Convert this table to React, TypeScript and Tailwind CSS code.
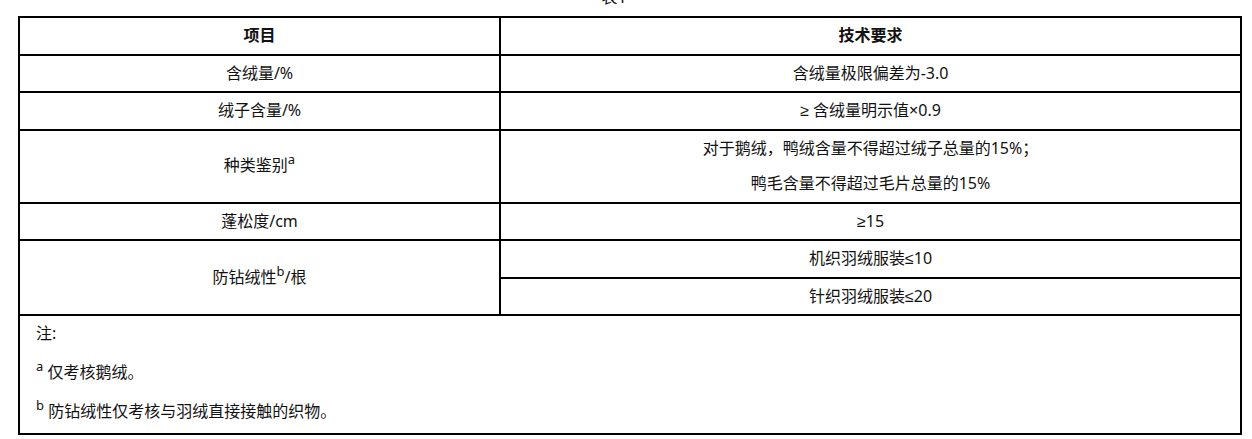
export default function App() {
  const cell = 'border-2 border-black text-center align-middle leading-[35.5px] p-0';
  const sym = "font-['Liberation_Sans',sans-serif]";

  return (
    <div className="bg-white w-[1252px] h-[439px] overflow-hidden font-['Noto_Sans','Noto_Sans_CJK_SC',sans-serif] text-[16px] text-[#111]">
      <div className="ml-[18px] w-[1224px]">
        {/* caption is scrolled mostly out of view */}
        <div className="-mt-[15px] h-6 leading-6 text-center pr-[32px]">表1</div>
        <table className="mt-[7px] w-full border-collapse border-2 border-black">
          <colgroup>
            <col className="w-[481px]" />
            <col />
          </colgroup>
          <tbody>
            <tr>
              <td className={`${cell} font-bold`}>项目</td>
              <td className={`${cell} font-bold`}>技术要求</td>
            </tr>
            <tr>
              <td className={cell}>含绒量/%</td>
              <td className={cell}>含绒量极限偏差为-3.0</td>
            </tr>
            <tr>
              <td className={cell}>绒子含量/%</td>
              <td className={cell}>
                <span className={sym}>≥</span> 含绒量明示值×0.9
              </td>
            </tr>
            <tr>
              <td className={cell}>
                种类鉴别<sup className="text-[13px] -top-[0.55em]">a</sup>
              </td>
              <td className={cell}>
                <p>对于鹅绒，鸭绒含量不得超过绒子总量的15%；</p>
                <p>鸭毛含量不得超过毛片总量的15%</p>
              </td>
            </tr>
            <tr>
              <td className={cell}>蓬松度/cm</td>
              <td className={cell}>
                <span className={sym}>≥</span>15
              </td>
            </tr>
            <tr>
              <td className={cell} rowSpan={2}>
                防钻绒性<sup className="text-[13px] -top-[0.55em]">b</sup>/根
              </td>
              <td className={cell}>
                机织羽绒服装<span className={sym}>≤</span>10
              </td>
            </tr>
            <tr>
              <td className={cell}>
                针织羽绒服装<span className={sym}>≤</span>20
              </td>
            </tr>
            <tr>
              <td className="border-2 border-black text-left align-top pl-4 pt-[5px] pb-[10px]" colSpan={2}>
                <div className="flex flex-col gap-[15px] leading-6">
                  <p>注:</p>
                  <p>
                    <sup className="text-[13px] -top-[0.55em]">a</sup> 仅考核鹅绒。
                  </p>
                  <p>
                    <sup className="text-[13px] -top-[0.55em]">b</sup> 防钻绒性仅考核与羽绒直接接触的织物。
                  </p>
                </div>
              </td>
            </tr>
          </tbody>
        </table>
      </div>
    </div>
  );
}
